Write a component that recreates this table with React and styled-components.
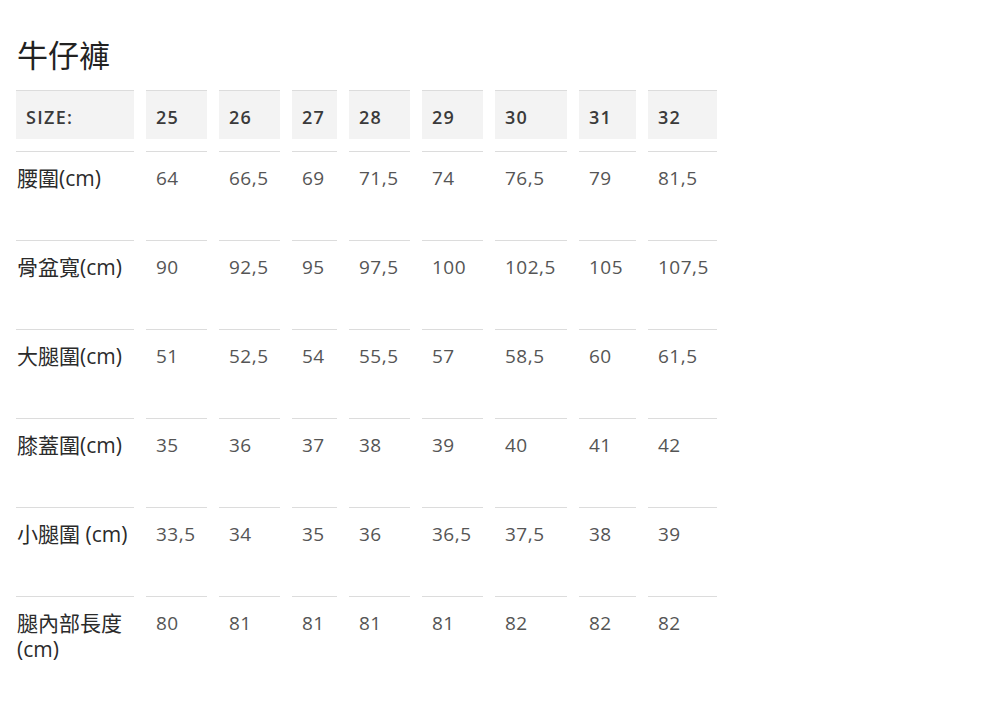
import React from "react";
import styled, { createGlobalStyle } from "styled-components";

const GlobalStyle = createGlobalStyle`
  body {
    margin: 0;
    background: #fff;
    font-family: "Open Sans", "Noto Sans CJK TC", sans-serif;
  }
`;

const Page = styled.div`
  padding: 32px 16px;
`;

const Title = styled.h1`
  margin: 0 0 12px 1px;
  font-size: 31px;
  font-weight: 400;
  line-height: 46px;
  color: #222;
`;

const Grid = styled.div`
  display: grid;
  grid-template-columns: 118px 61px 61px 45px 61px 61px 72px 57px 69px;
  column-gap: 12px;
  row-gap: 12px;
`;

const HeadCell = styled.div`
  height: 49px;
  box-sizing: border-box;
  border-top: 1px solid #dcdcdc;
  background: #f3f3f3;
  padding: 3px 0 0 10px;
  display: flex;
  align-items: center;
  font-size: 18px;
  font-weight: 600;
  color: #3a3a3a;
  letter-spacing: 1.3px;
`;

const Cell = styled.div`
  height: 77px;
  border-top: 1px solid #dcdcdc;
  padding: 13px 0 0 ${(p) => (p.$label ? "1px" : "10px")};
  box-sizing: border-box;
  font-size: ${(p) => (p.$label ? "21px" : "19px")};
  letter-spacing: ${(p) => (p.$label ? "0" : "0.5px")};
  line-height: 26px;
  color: ${(p) => (p.$label ? "#2b2b2b" : "#555")};
`;

const sizes = ["25", "26", "27", "28", "29", "30", "31", "32"];

const rows = [
  ["腰圍(cm)", "64", "66,5", "69", "71,5", "74", "76,5", "79", "81,5"],
  ["骨盆寬(cm)", "90", "92,5", "95", "97,5", "100", "102,5", "105", "107,5"],
  ["大腿圍(cm)", "51", "52,5", "54", "55,5", "57", "58,5", "60", "61,5"],
  ["膝蓋圍(cm)", "35", "36", "37", "38", "39", "40", "41", "42"],
  ["小腿圍 (cm)", "33,5", "34", "35", "36", "36,5", "37,5", "38", "39"],
  ["腿內部長度(cm)", "80", "81", "81", "81", "81", "82", "82", "82"],
];

const App = () => {
  return (
    <Page>
      <GlobalStyle />
      <Title>牛仔褲</Title>
      <Grid>
        <HeadCell>SIZE:</HeadCell>
        {sizes.map((s) => (
          <HeadCell key={s}>{s}</HeadCell>
        ))}
        {rows.map((row, r) =>
          row.map((v, i) => (
            <Cell key={r + "-" + i} $label={i === 0}>
              {v}
            </Cell>
          ))
        )}
      </Grid>
    </Page>
  );
};

export default App;
